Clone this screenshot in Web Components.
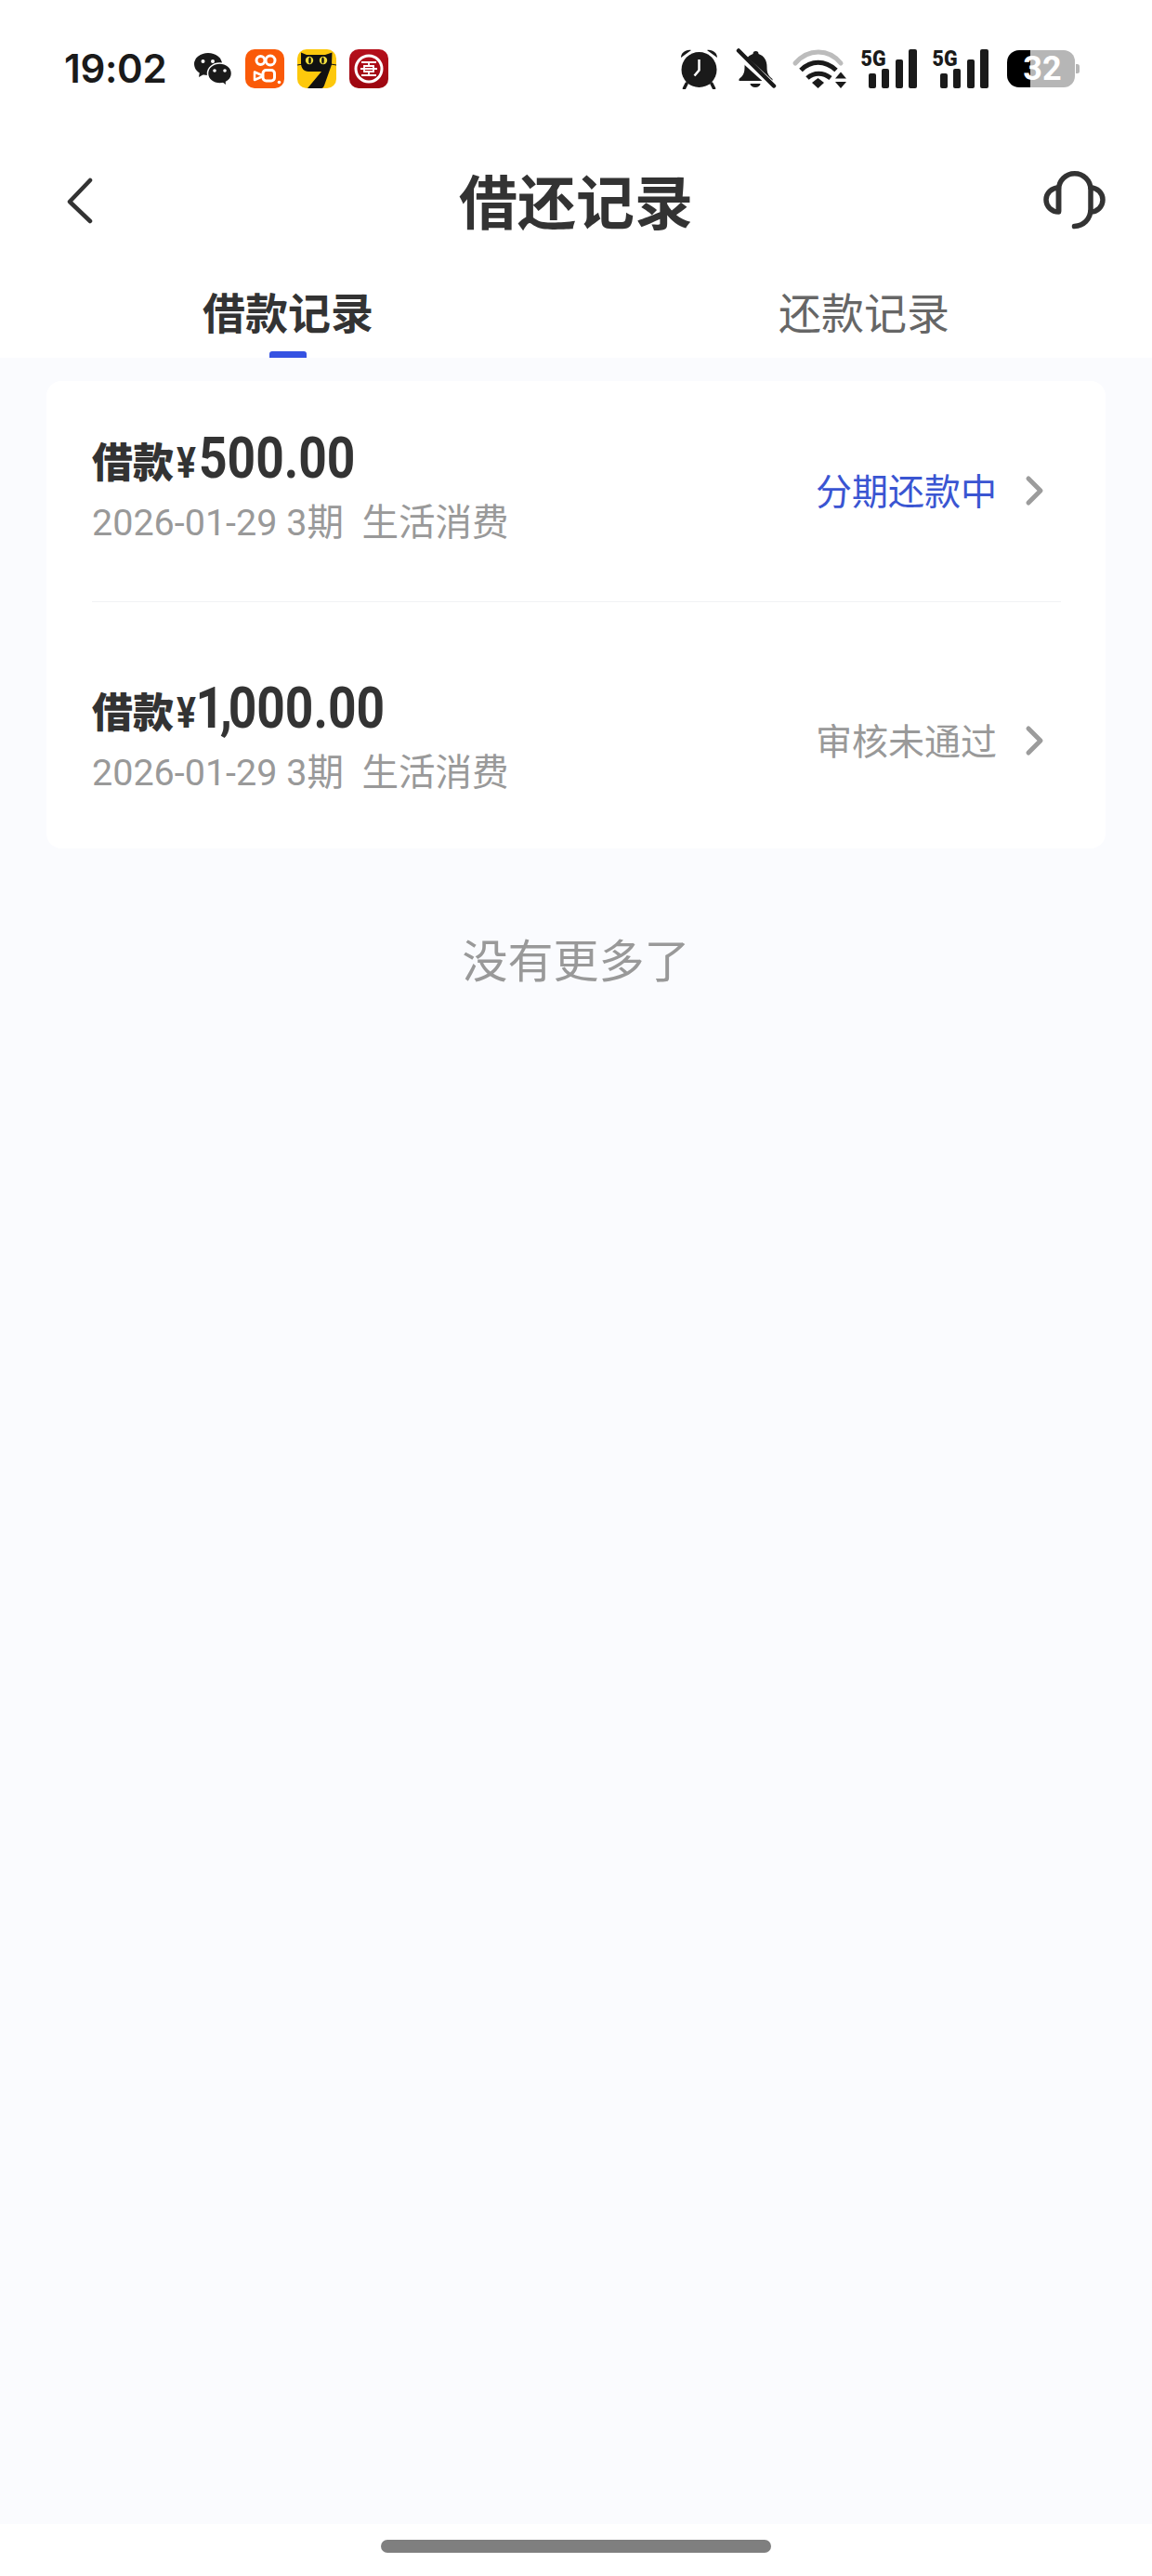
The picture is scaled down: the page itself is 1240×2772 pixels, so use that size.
<!DOCTYPE html>
<html lang="zh-CN">
<head>
<meta charset="utf-8">
<title>借还记录</title>
<style>
  html, body { margin: 0; padding: 0; background: #fff; }
  body { font-family: Roboto, "Noto Sans CJK SC", sans-serif; }
</style>
</head>
<body>
<app-page>
  <status-bar slot="top"></status-bar>
  <nav-bar slot="top" heading="借还记录"></nav-bar>
  <tab-bar slot="top">
    <tab-item active>借款记录</tab-item>
    <tab-item>还款记录</tab-item>
  </tab-bar>
  <record-card>
    <record-row amount="500.00" meta="2026-01-29 3期" purpose="生活消费" status="分期还款中" tone="active"></record-row>
    <record-row amount="1,000.00" meta="2026-01-29 3期" purpose="生活消费" status="审核未通过"></record-row>
  </record-card>
  <end-note>没有更多了</end-note>
  <home-indicator slot="bottom"></home-indicator>
</app-page>

<script>
const CJK = '"Noto Sans CJK SC", sans-serif';

class Base extends HTMLElement {
  constructor() {
    super();
    this.attachShadow({ mode: 'open' });
  }
}

customElements.define('app-page', class extends Base {
  constructor() {
    super();
    this.shadowRoot.innerHTML = `
      <style>
        :host { display: flex; flex-direction: column; height: 2772px; background: #fff; overflow: hidden; }
        .main { flex: 1; background: #fafbfe; padding: 25px 50px 0; display: flex; flex-direction: column; }
      </style>
      <slot name="top"></slot>
      <div class="main"><slot></slot></div>
      <slot name="bottom"></slot>`;
  }
});

customElements.define('status-bar', class extends Base {
  constructor() {
    super();
    const bars = `
      <rect x="8" y="26" width="8" height="16" rx="2"/>
      <rect x="22" y="21" width="8" height="21" rx="2"/>
      <rect x="37" y="11" width="8" height="31" rx="2"/>
      <rect x="51" y="0" width="9" height="42" rx="2"/>`;
    const signal = `
      <svg class="sig" width="60" height="54" viewBox="0 -6 60 54" fill="#1a1a1a" style="margin:-6px 0">
        <text x="-0.5" y="17.5" font-family="Roboto, sans-serif" font-weight="900" font-size="23" textLength="27" lengthAdjust="spacingAndGlyphs">5G</text>
        ${bars}
      </svg>`;
    this.shadowRoot.innerHTML = `
      <style>
        :host { display: flex; align-items: center; height: 150px; box-sizing: border-box; padding: 0 78px 2px 69px; background: #fff; color: #1a1a1a; }
        .time { font: 600 42px/1 Inter, sans-serif; width: 139px; flex: none; letter-spacing: -.3px; }
        svg { display: block; flex: none; }
        .apps { display: flex; align-items: center; }
        .spacer { flex: 1; }
        .sys { display: flex; align-items: center; }
        .batt { position: relative; width: 78px; height: 40px; flex: none; margin-left: 20px; }
        .batt b { position: absolute; left: 15px; top: 0; width: 46px; text-align: center; font: 700 36px/40px Roboto, sans-serif; color: #fff; }
      </style>
      <span class="time">19:02</span>
      <div class="apps">
        <svg width="42" height="34" viewBox="207 57 42 34" style="margin-right:14px">
          <ellipse cx="223" cy="69" rx="15" ry="12" fill="#1a1a1a"/>
          <path d="M214 77l-1 6 7-4z" fill="#1a1a1a"/>
          <circle cx="217.500" cy="66" r="2" fill="#fff"/><circle cx="228" cy="66" r="2" fill="#fff"/>
          <ellipse cx="235.500" cy="79" rx="13" ry="11" fill="#1a1a1a" stroke="#fff" stroke-width="1.500"/>
          <path d="M238 88l4 3-.5-5z" fill="#1a1a1a"/>
          <circle cx="230" cy="76" r="1.800" fill="#fff"/><circle cx="241" cy="76" r="1.800" fill="#fff"/>
        </svg>
        <svg width="42" height="42" viewBox="263 53 42 42" style="margin-right:14px">
          <rect x="263" y="53" width="42" height="42" rx="10" fill="#fa5a08"/>
          <g fill="none" stroke="#fff" stroke-width="3">
            <circle cx="279.500" cy="65" r="4.500"/><circle cx="290" cy="65" r="5"/>
            <rect x="282" y="75.500" width="12.500" height="11.500" rx="3.500"/>
          </g>
          <path d="M273 77.500l8 3.500v1.500l-8 3.500z" fill="none" stroke="#fff" stroke-width="2.500" stroke-linejoin="round"/>
          <circle cx="299.500" cy="88.500" r="1.800" fill="#fff"/>
        </svg>
        <svg width="42" height="42" viewBox="319 53 42 42" style="margin-right:14px">
          <rect x="319" y="53" width="42" height="42" rx="10" fill="#fdc80c"/>
          <path d="M323 56.500l6 2.500h20l7.500-2.500-.5 13-8 22.500c-.5 1.500-1.500 3-3 3h-15l15-18h-14c-5 0-8-4-8-9z" fill="#111"/>
          <path d="M319 70l6-1M361 70l-6-1" stroke="#111" stroke-width="1"/>
          <circle cx="332" cy="65" r="4.200" fill="#f0dc3c"/><circle cx="347" cy="65" r="4.200" fill="#f0dc3c"/>
          <ellipse cx="332.500" cy="65" rx="1.300" ry="3.500" fill="#111"/><ellipse cx="346.500" cy="65" rx="1.300" ry="3.500" fill="#111"/>
        </svg>
        <svg width="42" height="42" viewBox="375 53 42 42">
          <defs><linearGradient id="bk" x1="0" y1="0" x2="0" y2="1"><stop offset="0" stop-color="#b5101c"/><stop offset="1" stop-color="#9c0610"/></linearGradient></defs>
          <rect x="375" y="53" width="42" height="42" rx="10" fill="url(#bk)"/>
          <circle cx="396" cy="74" r="14" fill="none" stroke="#fff" stroke-width="3"/>
          <path d="M388 67h16M391 71h10v6h-10zM396 67v4M396 77v4M388 81h16M387 74h18" stroke="#fff" stroke-width="1.800" fill="none"/>
        </svg>
      </div>
      <div class="spacer"></div>
      <div class="sys">
        <svg width="44" height="44" viewBox="732 52 44 44" style="margin-right:17px">
          <circle cx="753.500" cy="75" r="19" fill="#1a1a1a"/>
          <path d="M734 62c0-5 5-9 11-8z M773 62c0-5-5-9-11-8z" fill="#1a1a1a"/>
          <path d="M740 90l-2.500 5M767 90l2.500 5" stroke="#1a1a1a" stroke-width="3.500" stroke-linecap="round"/>
          <path d="M753.500 64v11.500l-5 6" fill="none" stroke="#fff" stroke-width="2.500"/>
        </svg>
        <svg width="44" height="44" viewBox="792 52 44 44" style="margin-right:16px">
          <path d="M810.500 58a3 3 0 0 1 6 0c6 2 9 7 9 14 0 6 1 9 6 13v2h-36v-2c5-4 6-7 6-13 0-7 3-12 9-14z" fill="#1a1a1a"/>
          <path d="M807.500 90h11a5.500 4 0 0 1-11 0z" fill="#1a1a1a"/>
          <path d="M790 54l44 40" stroke="#fff" stroke-width="8"/>
          <path d="M795 54.500l38 38" stroke="#1a1a1a" stroke-width="4.500" stroke-linecap="round"/>
        </svg>
        <svg width="60" height="44" viewBox="852 52 60 44" style="margin-right:15px">
          <path d="M856 68c14-16 36-16 49 0" fill="none" stroke="#bcbcbc" stroke-width="5" stroke-linecap="round"/>
          <path d="M862 75.500c11-11 26-11 38 0" fill="none" stroke="#1a1a1a" stroke-width="5" stroke-linecap="butt"/>
          <path d="M869 84c7-6.500 17-6.500 25 0" fill="none" stroke="#1a1a1a" stroke-width="5"/>
          <path d="M874 89l6.500-5 6.500 5-6.500 6z" fill="#1a1a1a"/>
          <path d="M899 84.500l6-7 6 7zM899 88l6 7 6-7z" fill="#1a1a1a"/>
        </svg>
        ${signal}
        <div style="width:17px"></div>
        ${signal}
        <div class="batt">
          <svg width="78" height="40" viewBox="0 0 78 40">
            <path d="M25 0h-12a13 13 0 0 0-13 13v14a13 13 0 0 0 13 13h12z" fill="#000"/>
            <path d="M25 0h36a12 12 0 0 1 12 12v16a12 12 0 0 1-12 12h-36z" fill="#b6b6b6"/>
            <path d="M74 15h1.500a2.500 2.500 0 0 1 2.500 2.500v5a2.500 2.500 0 0 1-2.500 2.500h-1.500z" fill="#b6b6b6"/>
          </svg>
          <b>32</b>
        </div>
      </div>`;
  }
});

customElements.define('nav-bar', class extends Base {
  connectedCallback() {
    this.shadowRoot.innerHTML = `
      <style>
        :host { display: grid; grid-template-columns: 1fr auto 1fr; align-items: center; height: 134px; padding: 0 50px 0 70px; background: #fff; }
        h1 { margin: 0 0 6px; font: 700 63px/128px ${CJK}; color: #333; transform: translateX(-10px); }
        svg { display: block; }
        .r { justify-self: end; margin-bottom: 4px; }
      </style>
      <svg width="32" height="52" viewBox="0 0 32 52"><path d="M27 4L5 27l22 21" transform="translate(0 -1)" fill="none" stroke="#333" stroke-width="4.500" stroke-linecap="round" stroke-linejoin="round"/></svg>
      <h1>${this.getAttribute('heading')}</h1>
      <svg class="r" width="68" height="68" viewBox="1122 181 68 68">
        <g fill="none" stroke="#333" stroke-width="5.500" stroke-linecap="round" stroke-linejoin="round">
          <path d="M1139.500 227V204a17 17 0 0 1 34.500 0v21c0 11-8 18-17.500 18.500"/>
          <path d="M1139.500 202a13.500 13 0 0 0 0 26z"/>
          <path d="M1174 202a13 13 0 0 1 0 26"/>
        </g>
      </svg>`;
  }
});

customElements.define('tab-bar', class extends Base {
  constructor() {
    super();
    this.shadowRoot.innerHTML = `
      <style>:host { display: grid; grid-template-columns: 1fr 1fr; height: 101px; background: #fff; }</style>
      <slot></slot>`;
  }
});

customElements.define('tab-item', class extends Base {
  constructor() {
    super();
    this.shadowRoot.innerHTML = `
      <style>
        :host { display: flex; flex-direction: column; align-items: center; height: 101px; color: #666; font: 400 46px/1 ${CJK}; }
        :host([active]) { color: #333; font-weight: 700; }
        .label { height: 94px; line-height: 101px; }
        .mark { width: 40px; height: 7px; border-radius: 3px 3px 0 0; background: transparent; }
        :host([active]) .mark { background: #3552e2; }
      </style>
      <span class="label"><slot></slot></span>
      <span class="mark"></span>`;
  }
});

customElements.define('record-card', class extends Base {
  constructor() {
    super();
    this.shadowRoot.innerHTML = `
      <style>:host { display: block; background: #fff; border-radius: 16px; padding: 0 48px 0 49px; }</style>
      <slot></slot>`;
  }
});

customElements.define('record-row', class extends Base {
  connectedCallback() {
    const g = n => this.getAttribute(n);
    const amount = g('amount').replace(/^1,/, '<span class="t">1,</span>');
    this.shadowRoot.innerHTML = `
      <style>
        :host { display: flex; align-items: center; justify-content: space-between; padding: 58px 0 56px; }
        :host(:not(:first-child)) { padding-top: 89px; }
        :host(:not(:last-child)) { padding-bottom: 59px; border-bottom: 1px solid #f1f2f4; }
        .info { display: flex; flex-direction: column; height: 120px; }
        .amount { display: flex; align-items: baseline; height: 70px; margin-top: -5px; margin-bottom: 5px; color: #333; font: 900 44px/60px ${CJK}; white-space: nowrap; }
        .yen { display: inline-block; font: 700 46px/60px Roboto, sans-serif; margin: 0 -1px 0 3px; transform: scaleX(.85); transform-origin: left; }
        .num { display: inline-block; font: 700 62px/60px Roboto, sans-serif; transform: scaleX(.86); transform-origin: left; }
        .t { letter-spacing: -5px; margin-left: -4px; }
        .meta { height: 50px; font: 400 39.5px/50px Roboto, ${CJK}; color: #999; white-space: pre; }
        .side { display: flex; align-items: center; }
        .status { font: 400 39px/1 ${CJK}; color: #999; margin-top: -3px; }
        :host([tone="active"]) .status { color: #3a55d2; }
        svg { display: block; margin-left: 30px; margin-right: 17px; }
      </style>
      <div class="info">
        <div class="amount"><span>借款</span><span class="yen">¥</span><span class="num">${amount}</span></div>
        <div class="meta">${g('meta')}  ${g('purpose')}</div>
      </div>
      <div class="side">
        <span class="status">${g('status')}</span>
        <svg width="22" height="34" viewBox="0 0 22 34"><path d="M4 4l13 13L4 30" fill="none" stroke="#9c9c9c" stroke-width="5" stroke-linejoin="round" stroke-linecap="round"/></svg>
      </div>`;
  }
});

customElements.define('end-note', class extends Base {
  constructor() {
    super();
    this.shadowRoot.innerHTML = `
      <style>:host { display: block; margin-top: 87px; text-align: center; color: #999; font: 400 49px/62px ${CJK}; }</style>
      <slot></slot>`;
  }
});

customElements.define('home-indicator', class extends Base {
  constructor() {
    super();
    this.shadowRoot.innerHTML = `
      <style>
        :host { display: flex; justify-content: center; height: 56px; box-sizing: border-box; padding-top: 17px; background: #fff; }
        i { display: block; width: 420px; height: 14px; border-radius: 7px; background: #7f7f7f; }
      </style>
      <i></i>`;
  }
});
</script>
</body>
</html>
